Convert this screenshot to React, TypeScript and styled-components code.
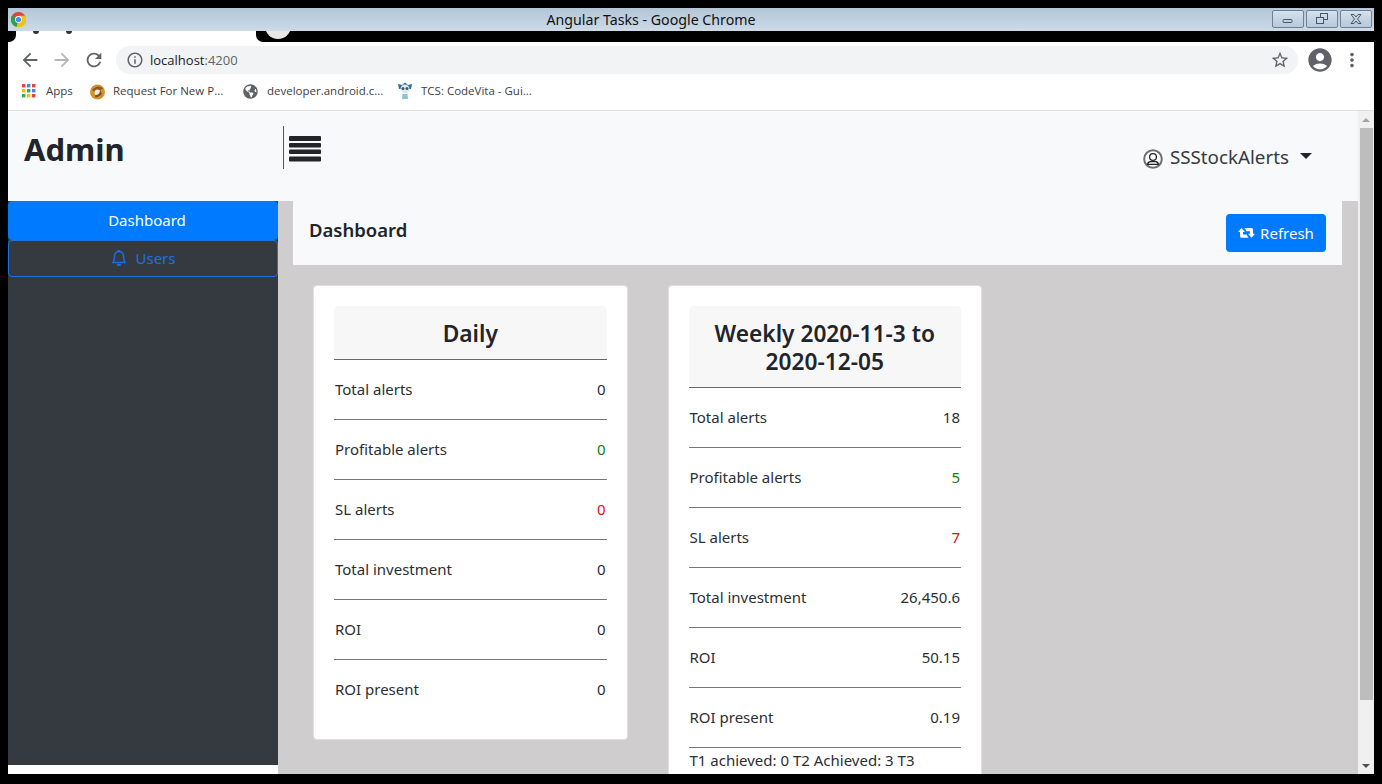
import React from 'react';
import styled, { createGlobalStyle } from 'styled-components';
import { BsBell } from 'react-icons/bs';
import { FaGlobeAmericas } from 'react-icons/fa';
import {
  MdAccountCircle,
  MdArrowBack,
  MdArrowForward,
  MdInfoOutline,
  MdMoreVert,
  MdRefresh,
  MdStarBorder,
} from 'react-icons/md';

const FONT = '"Noto Sans", "Open Sans", sans-serif';

const GlobalStyle = createGlobalStyle`
  html, body {
    margin: 0;
    padding: 0;
    height: 784px;
    overflow: hidden;
    background: #000;
    font-family: ${FONT};
  }
  * { box-sizing: border-box; }
`;

const Frame = styled.div`
  width: 1382px;
  height: 784px;
  padding: 8px 8px 10px;
  background: #000;
  display: flex;
  flex-direction: column;
  overflow: hidden;
`;

const TitleBar = styled.div`
  height: 23px;
  flex: none;
  display: flex;
  align-items: center;
  justify-content: space-between;
  padding: 0 2px 0 3px;
  background: linear-gradient(180deg, #b3c5d7 0%, #cddbe8 100%);
  position: relative;
`;

const TitleText = styled.div`
  position: absolute;
  left: 0;
  right: 80px;
  text-align: center;
  font-size: 14.2px;
  color: #111;
`;

const WindowButtons = styled.div`
  display: flex;
  gap: 2px;
  margin-top: -1px;
`;

const WindowButton = styled.div`
  width: 32px;
  height: 18px;
  border: 1px solid #6d8299;
  border-radius: 2px;
  display: flex;
  align-items: center;
  justify-content: center;
  background: linear-gradient(180deg, #d5e1ec, #b7c9da);
`;

const TabStrip = styled.div`
  height: 11px;
  flex: none;
  display: flex;
  overflow: hidden;
  background: #000;
`;

const TabCorner = styled.div`
  width: 8px;
  background: #fff;
`;

const TabLeftGap = styled.div`
  height: 100%;
  background: #000;
  border-bottom-right-radius: 7px;
`;

const TabRightGap = styled.div`
  height: 100%;
  background: #000;
  border-bottom-left-radius: 7px;
`;

const ActiveTab = styled.div`
  width: 240px;
  background: #fff;
  display: flex;
  padding-left: 17px;
  gap: 27px;
`;

const TabMark = styled.div`
  width: 6px;
  height: 3px;
  background: #333;
  border-radius: 0 0 3px 3px;
`;

const TabStripRest = styled.div`
  flex: 1;
  padding-left: 1px;
  background: #000;
`;

const TabCircle = styled.div`
  width: 26px;
  height: 26px;
  margin-top: -18px;
  border-radius: 50%;
  background: #e8e8e8;
`;

const Toolbar = styled.div`
  height: 36px;
  flex: none;
  background: #fff;
  display: flex;
  align-items: flex-start;
  padding: 4px 0 0 6px;
  color: #5f6368;
`;

const NavIcon = styled.div<{ $muted?: boolean }>`
  width: 32px;
  height: 28px;
  display: flex;
  align-items: center;
  justify-content: center;
  font-size: 22px;
  color: ${(p) => (p.$muted ? '#b4b6b9' : '#5f6368')};
`;

const AccountIcon = styled(NavIcon)`
  margin-left: 6px;
  font-size: 28px;
`;

const Omnibox = styled.div`
  width: 1182px;
  height: 28px;
  margin-left: 6px;
  border-radius: 14px;
  background: #f1f3f4;
  display: flex;
  align-items: center;
  padding: 0 8px 0 10px;
  font-size: 13px;
  color: #202124;
  gap: 6px;
  font-family: "Open Sans", sans-serif;
`;

const UrlPort = styled.span`
  color: #5f6368;
  margin-left: -6px;
`;

const StarSlot = styled.div`
  margin-left: auto;
  display: flex;
  font-size: 20px;
  color: #5f6368;
`;

const Bookmarks = styled.div`
  height: 33px;
  flex: none;
  background: #fff;
  border-bottom: 1px solid #dcdee0;
  display: flex;
  align-items: flex-start;
  padding: 4px 0 0 14px;
  font-size: 11.5px;
  color: #3c4043;
  font-family: "Open Sans", sans-serif;
`;

const Bookmark = styled.div<{ $width: number; $gap: number }>`
  width: ${(p) => p.$width}px;
  height: 18px;
  display: flex;
  align-items: center;
  gap: ${(p) => p.$gap}px;
  white-space: nowrap;
`;

const BookmarkLabel = styled.span`
  margin-top: -2px;
`;

const Page = styled.div`
  flex: 1;
  min-height: 0;
  display: flex;
`;

const Viewport = styled.div`
  flex: 1;
  min-width: 0;
  display: flex;
  flex-direction: column;
`;

const Navbar = styled.div`
  height: 90px;
  flex: none;
  background: #f8f9fa;
  display: flex;
  align-items: flex-start;
  padding: 15px 46px 0 16px;
  color: #212529;
`;

const Brand = styled.div`
  width: 259px;
  font-size: 31px;
  line-height: 46px;
  font-weight: 700;
  color: #212529;
`;

const NavDivider = styled.div`
  width: 1px;
  height: 43px;
  background: #555;
`;

const MenuButton = styled.div`
  margin: 10px 0 0 5px;
  display: flex;
`;

const UserMenu = styled.div`
  margin: 16px 0 0 auto;
  display: flex;
  align-items: center;
  font-size: 18.8px;
  line-height: 30px;
  color: #343a40;
`;

const UserIcon = styled.span`
  display: flex;
  margin: 4px 7px 0 0;
`;

const Caret = styled.span`
  width: 0;
  height: 0;
  margin: -2px 0 0 11px;
  border-left: 6px solid transparent;
  border-right: 6px solid transparent;
  border-top: 6px solid #212529;
`;

const Body = styled.div`
  flex: 1;
  min-height: 0;
  display: flex;
`;

const SideColumn = styled.div`
  width: 270px;
  flex: none;
  background: #fff;
  padding-bottom: 9px;
  display: flex;
`;

const Sidebar = styled.nav`
  flex: 1;
  background: #343a40;
`;

const SideItem = styled.div<{ $active?: boolean }>`
  height: ${(p) => (p.$active ? 39 : 37)}px;
  display: flex;
  align-items: center;
  justify-content: center;
  gap: 9px;
  padding-left: ${(p) => (p.$active ? 8 : 0)}px;
  padding-bottom: 1px;
  font-size: 15px;
  border-radius: 4px;
  border: 1px solid ${(p) => (p.$active ? '#007bff' : '#1a73e0')};
  background: ${(p) => (p.$active ? '#007bff' : 'transparent')};
  color: ${(p) => (p.$active ? '#fff' : '#1a73e0')};
`;

const Main = styled.main`
  flex: 1;
  min-width: 0;
  background: #cfcdce;
  padding: 0 16px 0 15px;
  overflow: hidden;
`;

const PageHeader = styled.div`
  height: 64px;
  background: #f8f9fa;
  display: flex;
  align-items: flex-start;
  justify-content: space-between;
  padding: 13px 16px 0;
`;

const PageTitle = styled.div`
  font-size: 18.5px;
  line-height: 32px;
  font-weight: 600;
  color: #212529;
`;

const RefreshButton = styled.button`
  height: 38px;
  width: 100px;
  border: none;
  border-radius: 4px;
  background: #007bff;
  color: #fff;
  font-family: ${FONT};
  font-size: 15px;
  display: flex;
  align-items: center;
  justify-content: center;
  gap: 5px;
`;

const Cards = styled.div`
  display: flex;
  align-items: flex-start;
  gap: 40px;
  padding: 20px 20px 0;
`;

const Card = styled.section`
  width: 314.5px;
  padding: 20px;
  background: #fff;
  border: 1px solid #dfdfdf;
  border-radius: 4px;
`;

const CardHeader = styled.h2`
  margin: 0;
  padding: 14px 10px 11px;
  background: #f7f7f7;
  border-radius: 4px 4px 0 0;
  border-bottom: 1px solid #666;
  font-size: 22.7px;
  line-height: 28px;
  font-weight: 600;
  text-align: center;
  color: #212529;
`;

const Row = styled.div<{ $last?: boolean }>`
  height: ${(p) => (p.$last ? 59 : 60)}px;
  padding: 0 1px 2px;
  display: flex;
  align-items: center;
  justify-content: space-between;
  font-size: 15px;
  color: #2b2f33;
  border-bottom: ${(p) => (p.$last ? 'none' : '1px solid #777')};
`;

const RowValue = styled.span<{ $tone?: 'green' | 'red' }>`
  color: ${(p) => (p.$tone === 'green' ? '#137a13' : p.$tone === 'red' ? '#d8101c' : '#2b2f33')};
`;

const Note = styled.div`
  border-top: 1px solid #777;
  padding: 0 1px;
  font-size: 15px;
  line-height: 24px;
  color: #2b2f33;
`;

const ScrollBar = styled.div`
  width: 16px;
  flex: none;
  background: #f0f0f0;
  display: flex;
  flex-direction: column;
  align-items: center;
`;

const ScrollArrow = styled.div<{ $down?: boolean }>`
  height: 17px;
  flex: none;
  display: flex;
  align-items: center;
  &::before {
    content: '';
    border-left: 4px solid transparent;
    border-right: 4px solid transparent;
    ${(p) => (p.$down ? 'border-top: 4px solid #505050;' : 'border-bottom: 4px solid #a3a3a3;')}
  }
`;

const ScrollThumb = styled.div`
  width: 13px;
  height: 572px;
  background: #bdbdbd;
`;

const ScrollSpace = styled.div`
  flex: 1;
`;

const ChromeLogo = () => (
  <svg width="15" height="15" viewBox="0 0 16 16">
    <circle cx="8" cy="8" r="8" fill="#db4437" />
    <path d="M8 8 L1 4 A8 8 0 0 0 6 15.8 Z" fill="#2f9e4f" />
    <path d="M8 4 H15.2 A8 8 0 0 1 6 15.8 L8 8 Z" fill="#f4c20d" />
    <circle cx="8" cy="8" r="3.7" fill="#fff" />
    <circle cx="8" cy="8" r="2.8" fill="#4a8af4" />
  </svg>
);

const AppsIcon = () => {
  const colors = ['#ea4335', '#4285f4', '#ea4335', '#fbbc05', '#34a853', '#4285f4', '#34a853', '#fbbc05', '#ea4335'];
  return (
    <svg width="14" height="14" viewBox="0 0 14 14">
      {colors.map((c, i) => (
        <rect key={i} x={(i % 3) * 5} y={Math.floor(i / 3) * 5} width="3.4" height="3.4" fill={c} />
      ))}
    </svg>
  );
};

const RequestIcon = () => (
  <svg width="17" height="17" viewBox="0 0 17 17">
    <circle cx="8.5" cy="9" r="7.5" fill="#d4912f" />
    <path d="M3 7 Q8 1 14 5 L11 8 Q8 5 6 9 Z" fill="#8a5a22" />
    <circle cx="8.5" cy="9.5" r="3" fill="#f4ead8" />
    <path d="M6.5 12 Q11 12 11 7 L13 11 Q10 15 6 14 Z" fill="#7c5228" />
  </svg>
);

const TcsIcon = () => (
  <svg width="16" height="18" viewBox="0 0 16 18">
    <path d="M2 7 L1 2 L5 3 L8 0.5 L11 3 L15 2 L14 7 Z" fill="#2b6f95" />
    <circle cx="8" cy="7" r="4.5" fill="#dfeaf0" />
    <circle cx="6" cy="6.5" r="1.5" fill="#3c5a6e" />
    <circle cx="10" cy="6.5" r="1.5" fill="#3c5a6e" />
    <path d="M5.5 12 H10.5 L11 17 H5 Z" fill="#8fc3d2" />
  </svg>
);

const MenuIcon = () => (
  <svg width="32" height="26" viewBox="0 0 32 26" fill="#212529">
    <rect y="0" width="32" height="5" rx="1" />
    <rect y="7" width="32" height="4.5" rx="1" />
    <rect y="13.5" width="32" height="4.5" rx="1" />
    <rect y="20.5" width="32" height="5" rx="1" />
  </svg>
);

const UserGlyph = () => (
  <svg width="20" height="20" viewBox="0 0 20 20" fill="none">
    <circle cx="10" cy="10" r="8.8" fill="#fff" stroke="#6f6f6f" strokeWidth="2" />
    <circle cx="10" cy="8" r="3.4" stroke="#222" strokeWidth="1.3" />
    <path d="M4.6 15.4 Q4.8 12.8 7.4 12.6 H12.6 Q15.2 12.8 15.4 15.4 Z" stroke="#222" strokeWidth="1.3" />
  </svg>
);

const RetweetGlyph = () => (
  <svg width="17" height="10" viewBox="0 0 17 10" fill="#fff">
    <path d="M0 4 L3.5 0 L7 4 H5 V6.5 H8.5 L10.5 9.7 H3.6 Q2 9.7 2 8 V4 Z" />
    <path d="M17 5.7 L13.5 9.7 L10 5.7 H12 V3.2 H8.5 L6.5 0 H13.4 Q15 0 15 1.7 V5.7 Z" />
  </svg>
);

const WindowGlyph = ({ kind }: { kind: 'min' | 'restore' | 'close' }) => (
  <svg width="14" height="12" viewBox="0 0 14 12" fill="none" stroke="#44566a" strokeWidth="1">
    {kind === 'min' && <rect x="2" y="6.5" width="9" height="3" rx="1" />}
    {kind === 'restore' && (
      <>
        <rect x="5.5" y="0.5" width="7" height="6" />
        <rect x="1.5" y="4.5" width="7" height="6" fill="#c8d7e5" />
      </>
    )}
    {kind === 'close' && <path d="M2 1.5 L5 1.5 L7 4 L9 1.5 L12 1.5 L8.5 6 L12 10.5 L9 10.5 L7 8 L5 10.5 L2 10.5 L5.5 6 Z" />}
  </svg>
);

type Stat = { label: string; value: string; tone?: 'green' | 'red' };

const daily: Stat[] = [
  { label: 'Total alerts', value: '0' },
  { label: 'Profitable alerts', value: '0', tone: 'green' },
  { label: 'SL alerts', value: '0', tone: 'red' },
  { label: 'Total investment', value: '0' },
  { label: 'ROI', value: '0' },
  { label: 'ROI present', value: '0' },
];

const weekly: Stat[] = [
  { label: 'Total alerts', value: '18' },
  { label: 'Profitable alerts', value: '5', tone: 'green' },
  { label: 'SL alerts', value: '7', tone: 'red' },
  { label: 'Total investment', value: '26,450.6' },
  { label: 'ROI', value: '50.15' },
  { label: 'ROI present', value: '0.19' },
];

const StatRows = ({ stats }: { stats: Stat[] }) => (
  <>
    {stats.map((s, i) => (
      <Row key={s.label} $last={i === stats.length - 1}>
        <span>{s.label}</span>
        <RowValue $tone={s.tone}>{s.value}</RowValue>
      </Row>
    ))}
  </>
);

export default function App() {
  return (
    <Frame>
      <GlobalStyle />
      <TitleBar>
        <ChromeLogo />
        <TitleText>Angular Tasks - Google Chrome</TitleText>
        <WindowButtons>
          <WindowButton><WindowGlyph kind="min" /></WindowButton>
          <WindowButton><WindowGlyph kind="restore" /></WindowButton>
          <WindowButton><WindowGlyph kind="close" /></WindowButton>
        </WindowButtons>
      </TitleBar>
      <TabStrip>
        <TabCorner><TabLeftGap /></TabCorner>
        <ActiveTab>
          <TabMark />
          <TabMark />
        </ActiveTab>
        <TabCorner><TabRightGap /></TabCorner>
        <TabStripRest>
          <TabCircle />
        </TabStripRest>
      </TabStrip>
      <Toolbar>
        <NavIcon><MdArrowBack /></NavIcon>
        <NavIcon $muted><MdArrowForward /></NavIcon>
        <NavIcon><MdRefresh /></NavIcon>
        <Omnibox>
          <MdInfoOutline size={18} color="#5f6368" />
          localhost
          <UrlPort>:4200</UrlPort>
          <StarSlot><MdStarBorder /></StarSlot>
        </Omnibox>
        <AccountIcon><MdAccountCircle /></AccountIcon>
        <NavIcon><MdMoreVert /></NavIcon>
      </Toolbar>
      <Bookmarks>
        <Bookmark $width={67} $gap={10}><AppsIcon /><BookmarkLabel>Apps</BookmarkLabel></Bookmark>
        <Bookmark $width={154} $gap={7}><RequestIcon /><BookmarkLabel>Request For New P...</BookmarkLabel></Bookmark>
        <Bookmark $width={154} $gap={9}><FaGlobeAmericas size={15} color="#5f6368" /><BookmarkLabel>developer.android.c...</BookmarkLabel></Bookmark>
        <Bookmark $width={150} $gap={8}><TcsIcon /><BookmarkLabel>TCS: CodeVita - Gui...</BookmarkLabel></Bookmark>
      </Bookmarks>
      <Page>
        <Viewport>
          <Navbar>
            <Brand>Admin</Brand>
            <NavDivider />
            <MenuButton><MenuIcon /></MenuButton>
            <UserMenu>
              <UserIcon><UserGlyph /></UserIcon>
              SSStockAlerts
              <Caret />
            </UserMenu>
          </Navbar>
          <Body>
            <SideColumn>
              <Sidebar>
                <SideItem $active>Dashboard</SideItem>
                <SideItem><BsBell size={16} stroke="currentColor" strokeWidth={0.5} />Users</SideItem>
              </Sidebar>
            </SideColumn>
            <Main>
              <PageHeader>
                <PageTitle>Dashboard</PageTitle>
                <RefreshButton><RetweetGlyph />Refresh</RefreshButton>
              </PageHeader>
              <Cards>
                <Card>
                  <CardHeader>Daily</CardHeader>
                  <StatRows stats={daily} />
                </Card>
                <Card>
                  <CardHeader>Weekly 2020-11-3 to 2020-12-05</CardHeader>
                  <StatRows stats={weekly} />
                  <Note>T1 achieved: 0 T2 Achieved: 3 T3</Note>
                </Card>
              </Cards>
            </Main>
          </Body>
        </Viewport>
        <ScrollBar>
          <ScrollArrow />
          <ScrollThumb />
          <ScrollSpace />
          <ScrollArrow $down />
        </ScrollBar>
      </Page>
    </Frame>
  );
}
